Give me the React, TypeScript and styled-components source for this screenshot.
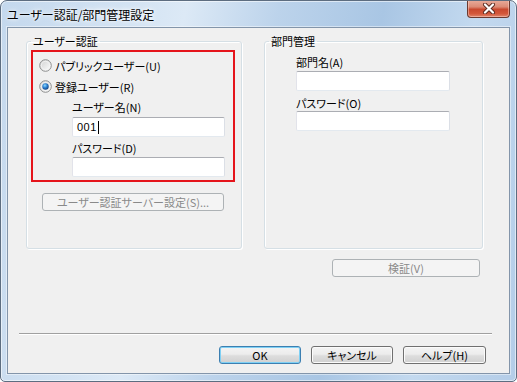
import React from "react";
import styled, { createGlobalStyle } from "styled-components";

const GlobalStyle = createGlobalStyle`
  html, body {
    margin: 0;
    padding: 0;
    background: #ffffff;
  }
  body {
    font-family: "Noto Sans CJK JP", "Noto Sans", sans-serif;
    font-feature-settings: "palt";
    font-size: 11px;
    color: #000;
  }
`;

const Window = styled.div`
  width: 517px;
  height: 382px;
  box-sizing: border-box;
  display: flex;
  flex-direction: column;
  padding: 0 6px 7px;
  border: 1px solid #5d6d80;
  border-radius: 7px 7px 5px 5px;
  background: linear-gradient(
    100deg,
    #c4d8ed 0%,
    #d3e3f3 22%,
    #dce9f6 32%,
    #bcd3eb 48%,
    #a9c6e4 66%,
    #c3d9ef 82%,
    #b4cde8 100%
  );
  box-shadow: inset 0 0 0 1px rgba(255, 255, 255, 0.55);
  overflow: hidden;
`;

const TitleBar = styled.div`
  height: 26px;
  display: flex;
  align-items: flex-start;
`;

const Title = styled.div`
  margin-top: 6px;
  font-size: 12px;
  line-height: 15px;
  color: #000;
  text-shadow: 0 0 6px #ffffff, 0 0 3px #ffffff;
`;

const CloseButton = styled.div`
  margin-left: auto;
  margin-right: 0;
  margin-top: -1px;
  width: 43px;
  height: 18px;
  box-sizing: border-box;
  display: flex;
  align-items: center;
  justify-content: center;
  border: 1px solid #6b3a30;
  border-top: none;
  border-radius: 0 0 4px 4px;
  background: linear-gradient(
    #e9ad9c 0%,
    #dc8b76 40%,
    #c9492f 55%,
    #d3573a 80%,
    #e0866c 100%
  );
  box-shadow: inset 0 0 0 1px rgba(255, 220, 210, 0.45);
`;

const Client = styled.div`
  flex: 1;
  display: flex;
  flex-direction: column;
  background: #f0f0f0;
  border: 1px solid #8395aa;
  box-shadow: 0 0 0 1px rgba(255, 255, 255, 0.45);
`;

const GroupRow = styled.div`
  display: flex;
  gap: 22px;
  padding: 6px 0 0 18px;
`;

const GroupBox = styled.fieldset<{ $width: number }>`
  margin: 0;
  width: ${(p) => p.$width}px;
  height: 215px;
  box-sizing: border-box;
  padding: 2px 4px 4px;
  border: 1px solid #d5dfe5;
  border-radius: 3px;
  box-shadow: inset 1px 1px 0 #ffffff, 1px 1px 0 #ffffff;
  min-width: 0;
`;

const GroupLegend = styled.legend`
  padding: 0 2px;
  font-size: 11px;
  line-height: 14px;
`;

const Highlight = styled.div`
  width: 204px;
  box-sizing: border-box;
  border: 2px solid #e5141b;
  padding: 3px 8px 3px 6px;
`;

const RadioRow = styled.div`
  height: 21px;
  display: flex;
  align-items: center;
  gap: 3px;
`;

const Fields = styled.div<{ $indent: number; $width: number }>`
  margin-left: ${(p) => p.$indent}px;
  width: ${(p) => p.$width}px;
  display: flex;
  flex-direction: column;
`;

const FieldLabel = styled.div<{ $top: number }>`
  margin-top: ${(p) => p.$top}px;
  line-height: 14px;
  white-space: nowrap;
`;

const TextBox = styled.div<{ $top: number }>`
  margin-top: ${(p) => p.$top}px;
  height: 20px;
  box-sizing: border-box;
  display: flex;
  align-items: center;
  padding: 0 4px;
  background: #ffffff;
  border: 1px solid;
  border-color: #abadb3 #dbdfe6 #e3e9ef #e2e3ea;
  border-radius: 2px;
  font-family: "Liberation Sans", "Noto Sans", sans-serif;
  font-size: 11px;
  letter-spacing: 0.5px;
`;

const Caret = styled.span`
  display: inline-block;
  width: 1px;
  height: 13px;
  margin-left: 1px;
  background: #000;
`;

const PushButton = styled.div<{
  $width: number;
  $disabled?: boolean;
  $default?: boolean;
}>`
  width: ${(p) => p.$width}px;
  height: 18px;
  box-sizing: border-box;
  display: flex;
  align-items: center;
  justify-content: center;
  border: 1px solid
    ${(p) => (p.$disabled ? "#adb2b5" : p.$default ? "#3c7fb1" : "#707070")};
  border-radius: 3px;
  background: ${(p) =>
    p.$disabled
      ? "#f4f4f4"
      : "linear-gradient(#f4f4f4 0%, #ececec 45%, #dddddd 55%, #d0d0d0 100%)"};
  box-shadow: ${(p) =>
    p.$default
      ? "inset 0 0 0 1px #7fd0f4"
      : p.$disabled
      ? "none"
      : "inset 0 0 0 1px #fbfbfb"};
  color: ${(p) => (p.$disabled ? "#8a8a8a" : "#000")};
  font-size: 11px;
  line-height: 14px;
  white-space: nowrap;
`;

const ServerButtonRow = styled.div`
  margin: 11px 0 0 11px;
`;

const VerifyRow = styled.div`
  display: flex;
  justify-content: flex-end;
  margin-top: 10px;
  padding-right: 29px;
`;

const Footer = styled.div`
  margin-top: auto;
  display: flex;
  flex-direction: column;
  padding-bottom: 9px;
`;

const Separator = styled.div`
  height: 1px;
  margin: 0 17px 0 11px;
  background: #a0a0a0;
  box-shadow: 0 1px 0 #ffffff;
`;

const ButtonRow = styled.div`
  display: flex;
  justify-content: flex-end;
  gap: 10px;
  margin-top: 12px;
  padding-right: 23px;
`;

const CloseGlyph: React.FC = () => (
  <svg width="14" height="11" viewBox="0 0 14 11">
    <path
      d="M3 1.5 L11 9.5 M11 1.5 L3 9.5"
      stroke="#5b2a20"
      strokeWidth="4"
      strokeLinecap="round"
    />
    <path
      d="M3 1.5 L11 9.5 M11 1.5 L3 9.5"
      stroke="#ffffff"
      strokeWidth="2.2"
      strokeLinecap="round"
    />
  </svg>
);

const Radio: React.FC<{ checked?: boolean; id: string }> = ({
  checked,
  id,
}) => (
  <svg width="13" height="13" viewBox="0 0 13 13">
    <defs>
      <linearGradient id={`rf-${id}`} x1="0" y1="0" x2="1" y2="1">
        <stop offset="0" stopColor="#cfcfcf" />
        <stop offset="1" stopColor="#ffffff" />
      </linearGradient>
      <radialGradient id={`rd-${id}`} cx="0.4" cy="0.35" r="0.7">
        <stop offset="0" stopColor="#8fdcff" />
        <stop offset="0.5" stopColor="#2b7fd2" />
        <stop offset="1" stopColor="#123f78" />
      </radialGradient>
    </defs>
    <circle
      cx="6.5"
      cy="6.5"
      r="5.8"
      fill={`url(#rf-${id})`}
      stroke="#8e8f8f"
      strokeWidth="1"
    />
    <circle cx="6.5" cy="6.5" r="4.2" fill="none" stroke="#f4f4f4" strokeWidth="0.8" />
    {checked && <circle cx="6.5" cy="6.5" r="3.2" fill={`url(#rd-${id})`} />}
  </svg>
);

const App: React.FC = () => {
  return (
    <>
      <GlobalStyle />
      <Window>
        <TitleBar>
          <Title>ユーザー認証/部門管理設定</Title>
          <CloseButton>
            <CloseGlyph />
          </CloseButton>
        </TitleBar>

        <Client>
          <GroupRow>
            <GroupBox $width={216}>
              <GroupLegend>ユーザー認証</GroupLegend>
              <Highlight>
                <RadioRow>
                  <Radio id="public" />
                  <span>パブリックユーザー(U)</span>
                </RadioRow>
                <RadioRow>
                  <Radio id="registered" checked />
                  <span>登録ユーザー(R)</span>
                </RadioRow>
                <Fields $indent={33} $width={153}>
                  <FieldLabel $top={3}>ユーザー名(N)</FieldLabel>
                  <TextBox $top={3}>
                    001
                    <Caret />
                  </TextBox>
                  <FieldLabel $top={4}>パスワード(D)</FieldLabel>
                  <TextBox $top={2} />
                </Fields>
              </Highlight>
              <ServerButtonRow>
                <PushButton $width={182} $disabled>
                  ユーザー認証サーバー設定(S)...
                </PushButton>
              </ServerButtonRow>
            </GroupBox>

            <GroupBox $width={219}>
              <GroupLegend>部門管理</GroupLegend>
              <Fields $indent={27} $width={154}>
                <FieldLabel $top={5}>部門名(A)</FieldLabel>
                <TextBox $top={2} />
                <FieldLabel $top={5}>パスワード(O)</FieldLabel>
                <TextBox $top={1} />
              </Fields>
            </GroupBox>
          </GroupRow>

          <VerifyRow>
            <PushButton $width={148} $disabled>
              検証(V)
            </PushButton>
          </VerifyRow>

          <Footer>
            <Separator />
            <ButtonRow>
              <PushButton $width={82} $default>
                OK
              </PushButton>
              <PushButton $width={82}>キャンセル</PushButton>
              <PushButton $width={83}>ヘルプ(H)</PushButton>
            </ButtonRow>
          </Footer>
        </Client>
      </Window>
    </>
  );
};

export default App;
